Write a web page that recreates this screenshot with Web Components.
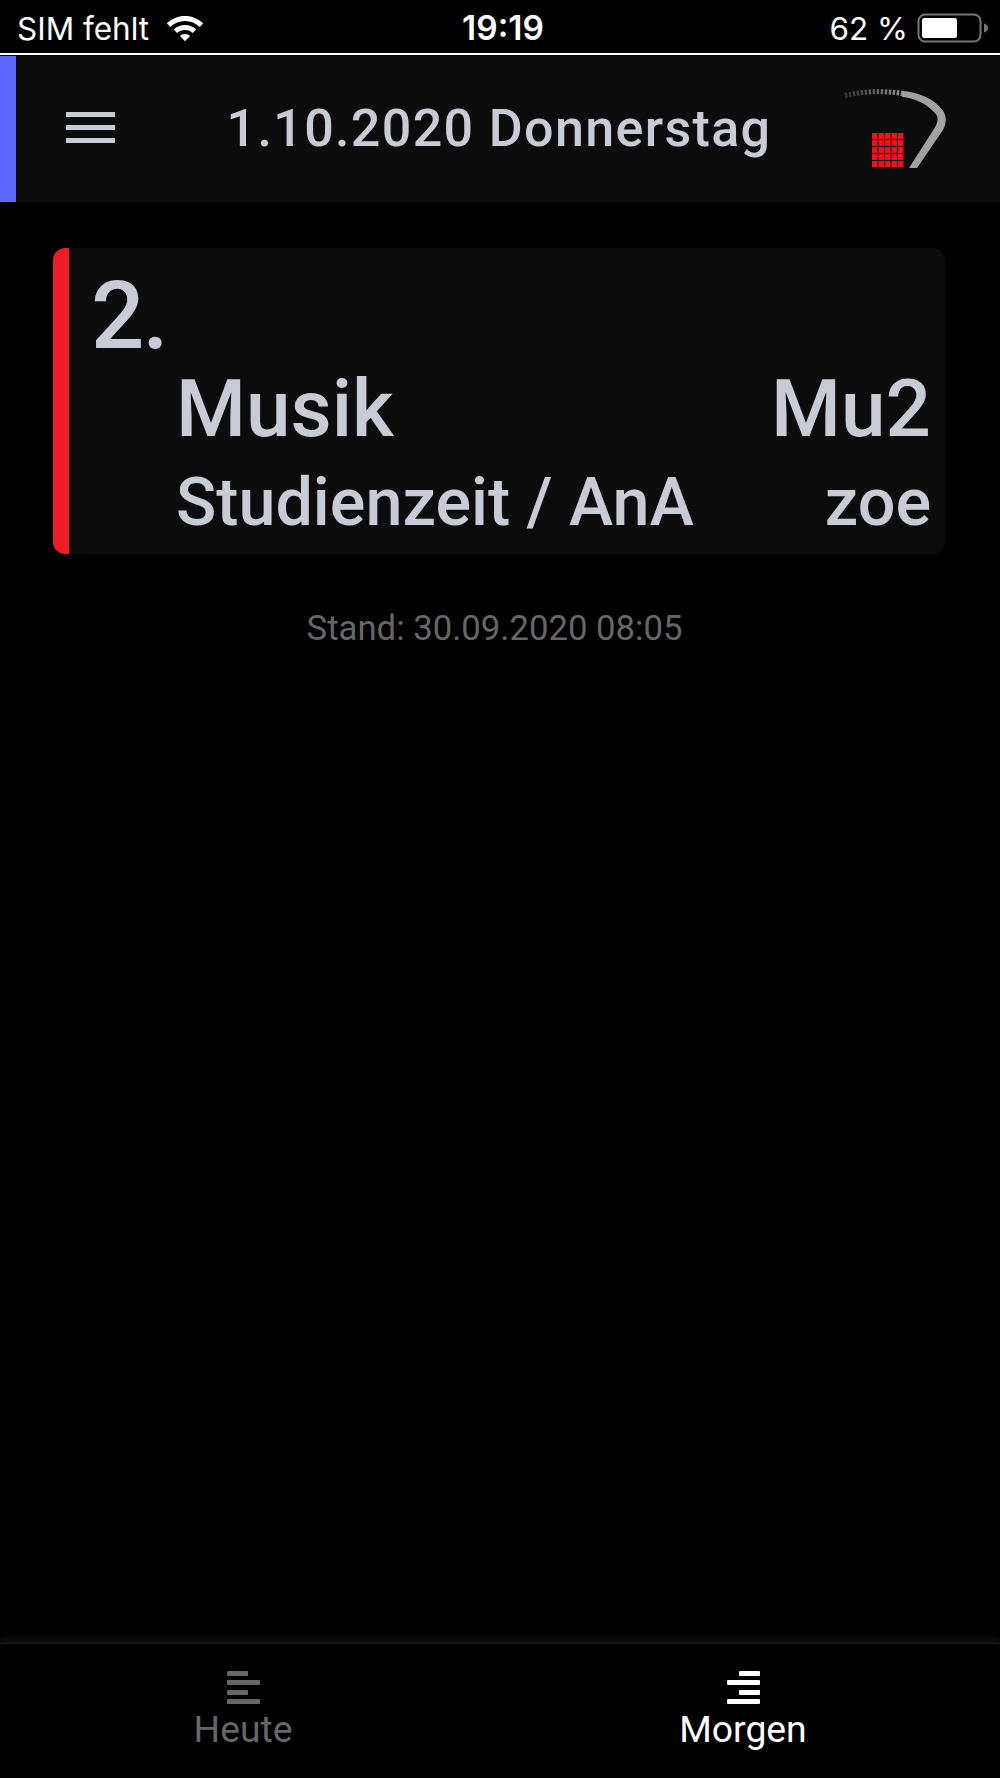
<!DOCTYPE html>
<html lang="de">
<head>
<meta charset="utf-8">
<title>Vertretungsplan</title>
<style>
html, body{ margin: 0; height: 100%; background: #000; }
body{ font-family: Roboto, "Liberation Sans", sans-serif; }
app-shell{ height: 1778px; }
</style>
</head>
<body>

<app-shell>
	<status-bar slot="top" carrier="SIM fehlt" time="19:19" battery="62 %"></status-bar>
	<app-header slot="top" title="1.10.2020 Donnerstag"></app-header>

	<lesson-card hour="2." subject="Musik" room="Mu2" note="Studienzeit / AnA" teacher="zoe"></lesson-card>
	<stand-note>Stand: 30.09.2020 08:05</stand-note>

	<tab-bar slot="bottom">
		<tab-item icon="left">Heute</tab-item>
		<tab-item icon="right" active>Morgen</tab-item>
	</tab-bar>
</app-shell>

<script>
(function( window, document ) {

	class AppShell extends HTMLElement {
		constructor() {
			super();
			this.attachShadow( { mode: 'open' } ).innerHTML = `
				<style>
					:host{ display: flex; flex-direction: column; background: #000; }
					main{ flex: 1; display: flex; flex-direction: column; padding: 46px 55px 0 53px; }
				</style>
				<slot name="top"></slot>
				<main><slot></slot></main>
				<slot name="bottom"></slot>`;
		}
	}

	class StatusBar extends HTMLElement {
		connectedCallback() {
			this.attachShadow( { mode: 'open' } ).innerHTML = `
				<style>
					:host{
						display: grid;
						grid-template-columns: 1fr auto 1fr;
						align-items: center;
						box-sizing: border-box;
						height: 56px;
						padding: 0 11px 0 17px;
						background: #000;
						border-bottom: 1px solid #000;
						box-shadow: inset 0 -2px 0 #fff;
						color: #fff;
						font: 400 31.500px/1 Inter, Roboto, sans-serif;
					}
					.left, .right{ display: flex; align-items: center; }
					.right{ justify-content: flex-end; }
					span, .time{ margin-top: 2px; }
					.wifi{ margin-left: 17px; }
					.time{ font-weight: 600; font-size: 33.500px; }
					.battery{ margin-left: 9px; }
				</style>
				<div class="left">
					<span>${this.getAttribute( 'carrier' )}</span>
					<svg class="wifi" width="38" height="28" viewBox="0 0 38 28">
						<path fill="#fff" d="M19 2C12 2 6 4.600 .800 9.300l3.400 3.700C8.300 9.200 13.400 7.100 19 7.100s10.700 2.100 14.800 5.900l3.400-3.700C32 4.600 26 2 19 2z"/>
						<path fill="#fff" d="M19 11c-4.400 0-8.200 1.600-11.300 4.400l3.400 3.700c2.200-2 4.900-3.100 7.900-3.100s5.700 1.100 7.900 3.100l3.400-3.700C27.200 12.600 23.400 11 19 11z"/>
						<path fill="#fff" d="M19 20c-2 0-3.700.7-5 1.900l5 5.300 5-5.300c-1.300-1.200-3-1.900-5-1.900z"/>
					</svg>
				</div>
				<div class="time">${this.getAttribute( 'time' )}</div>
				<div class="right">
					<span>${this.getAttribute( 'battery' )}</span>
					<svg class="battery" width="72" height="32" viewBox="0 0 72 32">
						<rect x="1.500" y="2.500" width="62" height="27" rx="6.500" fill="none" stroke="#777" stroke-width="2"/>
						<rect x="5" y="6" width="35" height="20" rx="2.500" fill="#fff"/>
						<path fill="#777" d="M67 11.500c2.500.6 4 2.300 4 4.500s-1.500 3.900-4 4.500z"/>
					</svg>
				</div>`;
		}
	}

	class AppHeader extends HTMLElement {
		connectedCallback() {
			this.attachShadow( { mode: 'open' } ).innerHTML = `
				<style>
					:host{
						display: grid;
						grid-template-columns: 1fr auto 1fr;
						align-items: center;
						box-sizing: border-box;
						height: 146px;
						background: #0c0c0d;
						border-left: 16px solid #5b67fb;
						color: #c8ccd6;
					}
					.menu{ display: flex; flex-direction: column; gap: 8px; width: 49px; margin-left: 50px; margin-top: -3px; }
					.menu i{ display: block; height: 5px; background: #c8ccd6; }
					h1{ margin: 0 0 0 -18px; font: 500 52px/1 Roboto, sans-serif; letter-spacing: 1.350px; white-space: nowrap; }
					.logo{ justify-self: end; margin-right: 52px; }
				</style>
				<div class="menu"><i></i><i></i><i></i></div>
				<h1>${this.getAttribute( 'title' )}</h1>
				<svg class="logo" width="110" height="92" viewBox="0 0 110 92">
					<defs>
						<linearGradient id="fade" x1="7" x2="70" y1="0" y2="0" gradientUnits="userSpaceOnUse">
							<stop offset="0" stop-color="#9c9c9c" stop-opacity=".25"/>
							<stop offset="1" stop-color="#9c9c9c"/>
						</linearGradient>
					</defs>
					<path d="M7 12.500C28 7.500 52 7.500 72 12" fill="none" stroke="url(#fade)" stroke-width="5" stroke-dasharray="2.400 1.600"/>
					<path d="M64 8C78 9 92 14 101 23c7 7 9 14 4 24L79 85h-8L96 46c5-8 5-13-1-18C87 20 76 15 64 14z" fill="#a2a2a2"/>
					<g id="dots" fill="#f0101c"></g>
				</svg>`;

			// red dot matrix of the logo, five by five
			const dots = this.shadowRoot.querySelector( '#dots' );
			let cells = '';
			for ( let row = 0; row < 5; row++ ) {
				for ( let col = 0; col < 5; col++ ) {
					cells += `<rect x="${34 + col * 6.500}" y="${50 + row * 7}" width="5.500" height="6"/>`;
				}
			}
			dots.innerHTML = cells;
		}
	}

	class LessonCard extends HTMLElement {
		connectedCallback() {
			this.attachShadow( { mode: 'open' } ).innerHTML = `
				<style>
					:host{
						display: block;
						box-sizing: border-box;
						height: 306px;
						padding: 20px 14px 0 22px;
						background: #0c0c0d;
						border-left: 16px solid #ee1c25;
						border-radius: 12px;
						color: #c8ccd6;
						font-family: Roboto, sans-serif;
						font-weight: 500;
					}
					.hour{ font-size: 94px; line-height: 96px; letter-spacing: -2px; }
					.row{ display: flex; justify-content: space-between; margin-left: 85px; }
					.big{ font-size: 80px; line-height: 90px; }
					.small{ font-size: 66.500px; line-height: 80px; margin-top: 8px; }
				</style>
				<div class="hour">${this.getAttribute( 'hour' )}</div>
				<div class="row big"><span>${this.getAttribute( 'subject' )}</span><span>${this.getAttribute( 'room' )}</span></div>
				<div class="row small"><span>${this.getAttribute( 'note' )}</span><span>${this.getAttribute( 'teacher' )}</span></div>`;
		}
	}

	class StandNote extends HTMLElement {
		constructor() {
			super();
			this.attachShadow( { mode: 'open' } ).innerHTML = `
				<style>
					:host{
						display: block;
						margin: 54px 9px 0 0;
						text-align: center;
						color: #666;
						font: 400 34.700px/40px Roboto, sans-serif;
					}
				</style>
				<slot></slot>`;
		}
	}

	class TabBar extends HTMLElement {
		constructor() {
			super();
			this.attachShadow( { mode: 'open' } ).innerHTML = `
				<style>
					:host{
						display: grid;
						grid-template-columns: 486px 514px;
						box-sizing: border-box;
						height: 134px;
						padding-top: 27px;
						background: #000;
						box-shadow: 0 -1px 0 #1c1c1c, 0 -6px 6px #111;
					}
				</style>
				<slot></slot>`;
		}
	}

	class TabItem extends HTMLElement {
		connectedCallback() {
			const left = this.getAttribute( 'icon' ) === 'left';
			// short bars sit on the side the tab points to
			const shortX = left ? 0 : 12;
			this.attachShadow( { mode: 'open' } ).innerHTML = `
				<style>
					:host{
						display: flex;
						flex-direction: column;
						align-items: center;
						color: #666;
						font: 400 37.300px/42px Roboto, sans-serif;
					}
					:host([active]){ color: #fff; }
					svg{ display: block; fill: currentColor; margin-bottom: 3px; }
				</style>
				<svg width="33" height="34" viewBox="0 0 33 34">
					<rect x="${shortX}" y="0" width="21" height="5" rx="1"/>
					<rect x="0" y="9" width="33" height="5" rx="1"/>
					<rect x="${shortX}" y="19" width="21" height="5" rx="1"/>
					<rect x="0" y="28" width="33" height="5" rx="1"/>
				</svg>
				<slot></slot>`;
		}
	}

	window.customElements.define( 'app-shell', AppShell );
	window.customElements.define( 'status-bar', StatusBar );
	window.customElements.define( 'app-header', AppHeader );
	window.customElements.define( 'lesson-card', LessonCard );
	window.customElements.define( 'stand-note', StandNote );
	window.customElements.define( 'tab-bar', TabBar );
	window.customElements.define( 'tab-item', TabItem );

})( window, document );
</script>
</body>
</html>
